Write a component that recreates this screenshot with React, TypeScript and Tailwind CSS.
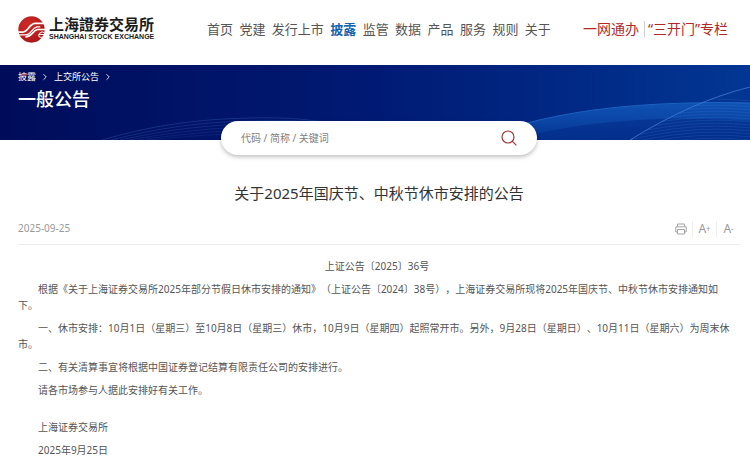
import React, { useState } from 'react';
import { ChevronRight } from 'lucide-react';

const navItems = ['首页', '党建', '发行上市', '披露', '监管', '数据', '产品', '服务', '规则', '关于'];

const paragraphs = [
  '根据《关于上海证券交易所2025年部分节假日休市安排的通知》（上证公告〔2024〕38号），上海证券交易所现将2025年国庆节、中秋节休市安排通知如下。',
  '一、休市安排：10月1日（星期三）至10月8日（星期三）休市，10月9日（星期四）起照常开市。另外，9月28日（星期日）、10月11日（星期六）为周末休市。',
  '二、有关清算事宜将根据中国证券登记结算有限责任公司的安排进行。',
  '请各市场参与人据此安排好有关工作。',
];

function LogoMark() {
  return (
    <svg viewBox="0 0 80 80" className="h-[27px] w-[27px] shrink-0" aria-hidden="true">
      <defs>
        <radialGradient id="logo-red" cx="0.35" cy="0.3" r="0.8">
          <stop offset="0" stopColor="#cf2a26" />
          <stop offset="1" stopColor="#a8171a" />
        </radialGradient>
        <clipPath id="logo-clip">
          <circle cx="40" cy="40" r="40" />
        </clipPath>
      </defs>
      <circle cx="40" cy="40" r="39" fill="url(#logo-red)" />
      <g clipPath="url(#logo-clip)" fill="none" stroke="#fff">
        <path d="M0 48 H12 C30 48 32 24 50 22 H80" strokeWidth="5" />
        <path d="M0 56 H22 C40 56 40 36 56 32 H66" strokeWidth="4" />
        <path d="M22 62 C42 62 42 44 58 40 H80" strokeWidth="5" />
        <path d="M80 55 H62 C66 45 76 46 76 50" strokeWidth="3" />
        <path d="M62 55 C60 64 68 64 76 62" strokeWidth="3" />
      </g>
    </svg>
  );
}

// バナー背景の波模様
function BannerWaves() {
  const mesh = Array.from({ length: 16 }, (_, i) => i);
  return (
    <svg
      viewBox="0 0 750 75"
      preserveAspectRatio="none"
      className="absolute inset-0 h-full w-full"
      aria-hidden="true"
    >
      <defs>
        <linearGradient id="wave-band" x1="0" y1="0" x2="0" y2="1">
          <stop offset="0" stopColor="#0f52b4" />
          <stop offset="0.5" stopColor="#0b45a4" />
          <stop offset="1" stopColor="#063796" stopOpacity="0.8" />
        </linearGradient>
        <clipPath id="wave-clip">
          <path d="M630 75 C670 50 710 32 750 22 V75 Z" />
        </clipPath>
      </defs>
      <g fill="none" stroke="#3d6cc0" strokeWidth="0.6">
        {[0, 1, 2, 3, 4, 5].map((i) => (
          <path
            key={i}
            d={`M${102 + i * 9} 75 C${150 + i * 8} ${61 + i * 2} ${195 + i * 5} ${54 + i * 3} 250 ${53 + i * 3} S310 56 345 60`}
            opacity={0.55 - i * 0.06}
          />
        ))}
      </g>
      <path d="M500 66 C570 43 650 36 750 38 V75 H500 Z" fill="url(#wave-band)" />
      <path d="M510 75 C580 56 660 50 750 56 V75 Z" fill="#042c88" opacity="0.6" />
      <path d="M500 66 C570 43 650 36 750 38" fill="none" stroke="#1c60c0" strokeWidth="1" />
      <g clipPath="url(#wave-clip)" fill="none" stroke="#4684d8" strokeWidth="0.5" opacity="0.4">
        {mesh.map((i) => (
          <path key={i} d={`M620 ${92 - i * 3} C670 ${80 - i * 3} 710 ${76 - i * 3} 760 ${82 - i * 3}`} />
        ))}
      </g>
      <path d="M630 75 C670 50 710 32 750 22" fill="none" stroke="#3f7ad2" strokeWidth="1" opacity="0.8" />
    </svg>
  );
}

function SearchIcon() {
  return (
    <svg viewBox="0 0 16 16" className="h-4 w-4" fill="none" stroke="#a33a3a" strokeWidth="1.2" aria-hidden="true">
      <circle cx="7" cy="7" r="6" />
      <path d="M11.2 11.2 L15.4 15.4" />
    </svg>
  );
}

function PrintIcon() {
  return (
    <svg viewBox="0 0 12 12" className="h-3 w-3" fill="none" stroke="#a3a3a3" strokeWidth="1" aria-hidden="true">
      <path d="M2.5 3.5 V1 H9.5 V3.5" />
      <path d="M2.5 9 H0.8 V3.8 H11.2 V9 H9.5" />
      <path d="M2.5 6.5 H9.5 V11 H2.5 Z" />
    </svg>
  );
}

export default function App() {
  const [keyword, setKeyword] = useState('');

  return (
    <div className="min-h-screen bg-white font-['Noto_Sans','Noto_Sans_CJK_SC',sans-serif] text-[#555] [text-spacing-trim:space-all]">
      {/* ヘッダー */}
      <header className="flex h-[65px] items-center pr-[22px] pl-[18px] pb-[7px]">
        <a href="#" className="flex w-[189px] shrink-0 items-center gap-1" aria-label="上海證券交易所">
          <LogoMark />
          <span className="flex flex-col whitespace-nowrap text-[#1c1c1c]">
            <span className="font-['Noto_Sans_CJK_TC',sans-serif] text-[15px] leading-4 font-bold">上海證券交易所</span>
            <span className="font-['Liberation_Sans',sans-serif] text-[7px] leading-[10px] font-bold">
              SHANGHAI STOCK EXCHANGE
            </span>
          </span>
        </a>
        <nav className="mr-8 flex flex-1 justify-between text-[13px] leading-5 whitespace-nowrap text-[#555]">
          {navItems.map((item) => (
            <a key={item} href="#" className={item === '披露' ? 'font-bold text-[#1463ae]' : ''}>
              {item}
            </a>
          ))}
        </nav>
        <div className="flex shrink-0 items-center text-[14px] leading-5 whitespace-nowrap text-[#b02a2a]">
          <a href="#" className="pr-[5px]">一网通办</a>
          <span className="h-4 w-px bg-[#d0d0d0]" />
          <a href="#" className="pl-[3px]">“三开门”专栏</a>
        </div>
      </header>

      {/* バナー */}
      <section className="relative h-[75px] bg-linear-to-r from-[#000c5a] via-[#001a74] to-[#033694] px-[18px] pt-[6px] text-white">
        <BannerWaves />
        <div className="relative">
          <div className="flex items-center gap-1 text-[9px] leading-3">
            <a href="#">披露</a>
            <ChevronRight className="h-[10px] w-[10px]" strokeWidth={2} />
            <a href="#">上交所公告</a>
            <ChevronRight className="h-[10px] w-[10px]" strokeWidth={2} />
          </div>
          <h1 className="mt-1 text-[18px] leading-6 font-medium">一般公告</h1>
        </div>
      </section>

      <div className="pr-[10px] pl-[18px]">
        {/* 検索 */}
        <form
          className="relative mx-auto -mt-[19px] flex h-[34px] w-[316px] items-center rounded-full bg-white px-5 shadow-[0_2px_4px_rgba(0,0,0,0.25)]"
          onSubmit={(e) => e.preventDefault()}
        >
          <input
            type="text"
            aria-label="搜索"
            value={keyword}
            onChange={(e) => setKeyword(e.target.value)}
            placeholder="代码 / 简称 / 关键词"
            className="min-w-0 flex-1 bg-transparent text-[10px] leading-4 outline-none placeholder:text-[#808080]"
          />
          <button type="submit" aria-label="搜索">
            <SearchIcon />
          </button>
        </form>

        {/* 公告本文 */}
        <main className="pt-7 pb-2">
          <h2 className="text-center text-[15px] leading-5 text-[#333]">关于2025年国庆节、中秋节休市安排的公告</h2>
          <div className="mt-[10px] flex h-8 items-center justify-between border-b border-[#ececec] text-[10px] text-[#999]">
            <time dateTime="2025-09-25">2025-09-25</time>
            <div className="flex items-center">
              <button type="button" aria-label="打印" className="pr-[5px]">
                <PrintIcon />
              </button>
              <button type="button" className="flex h-4 w-6 items-center justify-center border-l border-[#eee] text-[12px]">
                A<span className="text-[8px]">+</span>
              </button>
              <button type="button" className="flex h-4 w-6 items-center justify-center border-l border-[#eee] text-[12px]">
                A<span className="text-[8px]">-</span>
              </button>
            </div>
          </div>
          <article className="mt-[13px] space-y-[7px] pr-1 text-[10px] leading-4">
            <p className="text-center">上证公告〔2025〕36号</p>
            {paragraphs.map((text) => (
              <p key={text} className="indent-5">
                {text}
              </p>
            ))}
            <div className="space-y-[7px] pt-[14px] pl-5">
              <p>上海证券交易所</p>
              <p>2025年9月25日</p>
            </div>
          </article>
        </main>
      </div>
    </div>
  );
}
